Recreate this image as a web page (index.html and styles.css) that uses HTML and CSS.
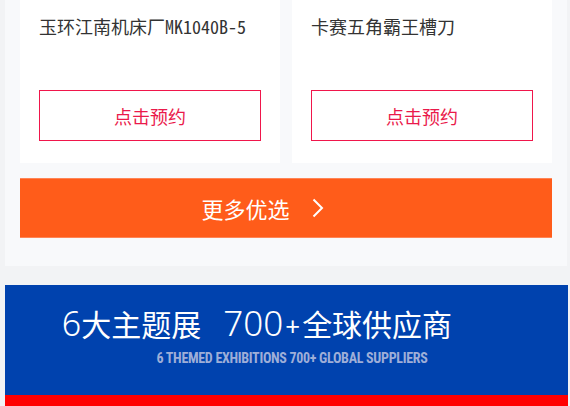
FILE: index.html
```html
<!DOCTYPE html>
<html>
<head>
	<meta charset="utf-8">
	<title>更多优选</title>
<link rel="stylesheet" href="styles.css">
</head>
<body>

<div class="goodsPanel">
	<div class="goodsList">
		<div class="goodsCard">
			<div class="goodsTitle">玉环江南机床厂<span class="goodsCode">MK1040B-5</span></div>
			<a class="bookBtn" href="#">点击预约</a>
		</div>
		<div class="goodsCard">
			<div class="goodsTitle">卡赛五角霸王槽刀</div>
			<a class="bookBtn" href="#">点击预约</a>
		</div>
	</div>
	<a class="moreBtn" href="#">更多优选<span class="moreArrow"><svg width="12" height="20" viewBox="0 0 12 20"><path d="M1.5 1.5 L10 10 L1.5 18.5" fill="none" stroke="#fff" stroke-width="2"/></svg></span></a>
</div>

<div class="expoBanner">
	<div class="expoHead"><span class="expoNum">6</span>大主题展<span class="expoNum expoBig">700</span><span class="expoPlus">+</span>全球供应商</div>
	<div class="expoSub">6 THEMED EXHIBITIONS 700+ GLOBAL SUPPLIERS</div>
</div>
<div class="expoStrip"></div>

</body>
</html>
```

FILE: styles.css
```css
body {
	margin: 0;
	background-color: #f2f3f5;
	font-family: "Noto Sans CJK SC", sans-serif;
	overflow: hidden;
}
a {
	text-decoration: none;
}
.goodsPanel {
	margin: 0 3px 0 5px;
	padding: 0 15px 28px;
	background-color: #f8f9fb;
}
.goodsList {
	display: grid;
	grid-template-columns: 1fr 1fr;
	gap: 12px;
}
.goodsCard {
	background-color: #fff;
	padding: 12px 19px 22px;
}
.goodsTitle {
	font-size: 18px;
	line-height: 28px;
	color: #333;
	white-space: nowrap;
}
.goodsCode {
	font-family: "Noto Sans Mono CJK SC", "DejaVu Sans Mono", monospace;
	font-size: 18px;
}
.bookBtn {
	display: flex;
	align-items: center;
	justify-content: center;
	margin-top: 50px;
	height: 49px;
	border: 1px solid #f0164b;
	color: #ea1a4b;
	font-size: 18px;
}
.moreBtn {
	display: flex;
	align-items: center;
	justify-content: center;
	margin-top: 15px;
	padding-right: 47px;
	height: 60px;
	box-sizing: border-box;
	background-color: #ff5c1a;
	border-top: 1px solid #ff8455;
	border-bottom: 1px solid #ff8455;
	color: #fff;
	font-size: 22px;
}
.moreArrow {
	display: flex;
	margin-left: 22px;
}
.expoBanner {
	margin: 19px 2px 0 5px;
	height: 110px;
	box-sizing: border-box;
	padding-top: 16px;
	background-color: #0042ae;
	color: #fff;
	text-align: center;
}
.expoHead {
	font-size: 30px;
	line-height: 44px;
	margin-left: -59px;
	white-space: nowrap;
}
.expoNum {
	font-family: "Noto Sans", sans-serif;
	font-size: 34px;
	font-weight: 300;
}
.expoBig {
	font-size: 35px;
	margin-left: 22px;
}
.expoPlus {
	font-family: "Noto Sans", sans-serif;
	font-size: 26px;
	margin: 0 2px;
}
.expoSub {
	margin-top: 2px;
	padding-left: 11px;
	font-family: "Liberation Sans Narrow", "Roboto Condensed", sans-serif;
	font-weight: bold;
	font-size: 14px;
	color: #9eaed8;
	letter-spacing: -0.3px;
}
.expoStrip {
	margin: 0 2px 0 5px;
	height: 20px;
	background-color: #ff0000;
}
```
